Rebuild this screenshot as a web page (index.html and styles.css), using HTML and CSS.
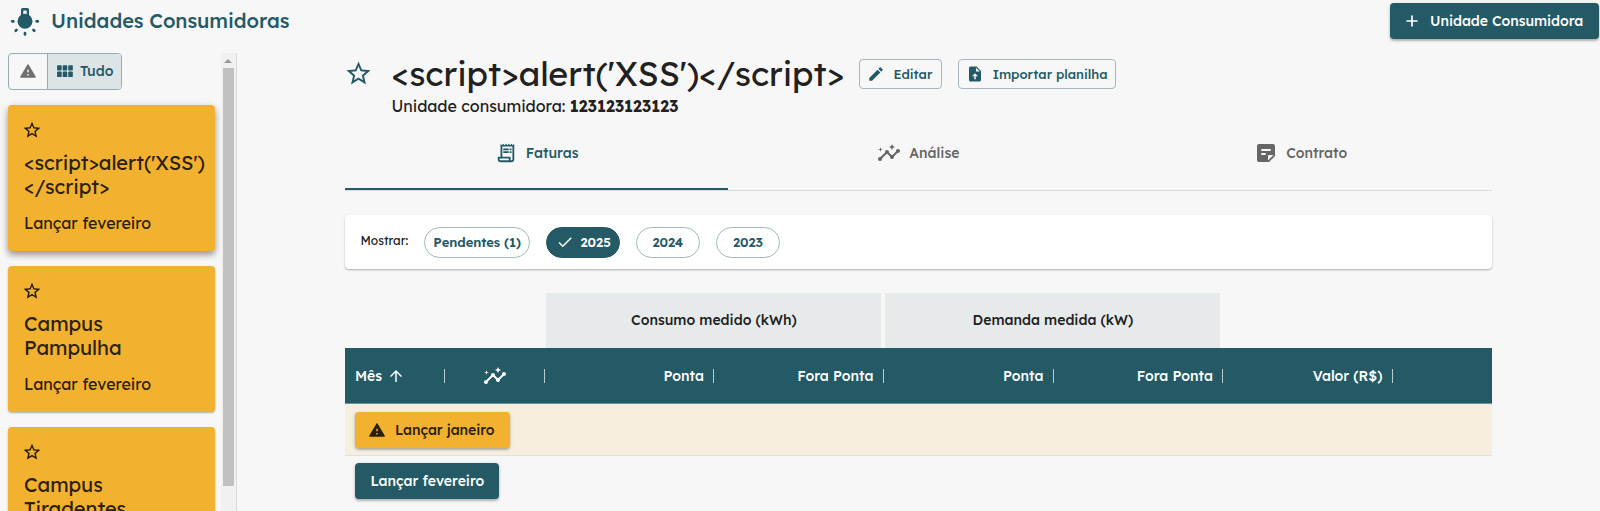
FILE: index.html
```html
<!DOCTYPE html>
<html lang="pt-BR">
<head>
<meta charset="utf-8">
<title>Unidades Consumidoras</title>
<link rel="stylesheet" href="styles.css">
</head>
<body>
<svg class="defs" width="0" height="0" aria-hidden="true">
  <symbol id="star" viewBox="0 0 24 24"><path d="m22 9.24-7.19-.62L12 2 9.19 8.63 2 9.24l5.46 4.73L5.82 21 12 17.27 18.18 21l-1.63-7.03L22 9.24zM12 15.4l-3.76 2.27 1-4.28-3.32-2.88 4.38-.38L12 6.1l1.71 4.04 4.38.38-3.32 2.88 1 4.28L12 15.4z"/></symbol>
  <symbol id="warn" viewBox="0 0 24 24"><path d="M2.7 21h18.600c.9 0 1.400-.9.9-1.700L12.900 3.500c-.4-.8-1.400-.8-1.800 0L1.800 19.300c-.5.8 0 1.700.9 1.700zM12 14c-.55 0-1-.45-1-1v-2c0-.55.45-1 1-1s1 .45 1 1v2c0 .55-.45 1-1 1zm1 4h-2v-2h2v2z"/></symbol>
  <symbol id="insights" viewBox="0 0 24 24"><path d="M21 8c-1.45 0-2.26 1.44-1.93 2.51l-3.55 3.56c-.3-.09-.74-.09-1.04 0l-2.55-2.55C12.27 10.45 11.46 9 10 9c-1.45 0-2.27 1.44-1.93 2.52l-4.56 4.55C2.44 15.74 1 16.55 1 18c0 1.1.9 2 2 2 1.45 0 2.26-1.44 1.93-2.51l4.55-4.56c.3.09.74.09 1.04 0l2.55 2.55C12.73 16.55 13.54 18 15 18c1.45 0 2.27-1.44 1.93-2.52l3.56-3.55C21.56 12.26 23 11.45 23 10c0-1.1-.9-2-2-2z"/><path d="m15 9 .94-2.07L18 6l-2.06-.93L15 3l-.92 2.07L12 6l2.08.93zM3.5 11 4 9l2-.5L4 8l-.5-2L3 8l-2 .5L3 9z"/></symbol>
</svg>

<header class="topbar">
  <svg class="bulb" viewBox="0 0 30 30"><circle cx="15" cy="14.200" r="7.500"/><path fill-rule="evenodd" d="M12.600 1h4.800q1.600 0 1.600 1.600V9h-8V2.600q0-1.600 1.600-1.600zM13.300 3.500v4h3.400v-4z"/><g fill="none" stroke="currentColor" stroke-width="2.700" stroke-linecap="round"><path d="M2.200 14.300h1.200M26.600 14.300h1.200M15 26v1.500M6.600 22.900l-.9.9M23.400 22.900l.9.9"/></g></svg>
  <h1 class="page-title">Unidades Consumidoras</h1>
  <button class="btn btn-primary btn-new"><svg class="i20" viewBox="0 0 24 24"><path d="M18 13h-5v5c0 .55-.45 1-1 1s-1-.45-1-1v-5H6c-.55 0-1-.45-1-1s.45-1 1-1h5V6c0-.55.45-1 1-1s1 .45 1 1v5h5c.55 0 1 .45 1 1s-.45 1-1 1z"/></svg><span>Unidade Consumidora</span></button>
</header>

<div class="body">
  <aside class="sidebar">
    <div class="list">
      <div class="toggle">
        <button class="toggle-item"><svg class="i18" viewBox="0 0 24 24"><use href="#warn"/></svg></button>
        <button class="toggle-item on"><svg class="i20" viewBox="0 0 24 24"><rect x="2.500" y="5" width="5.500" height="6.500" rx="1"/><rect x="9.200" y="5" width="5.500" height="6.500" rx="1"/><rect x="15.900" y="5" width="5.500" height="6.500" rx="1"/><rect x="2.500" y="12.700" width="5.500" height="6.500" rx="1"/><rect x="9.200" y="12.700" width="5.500" height="6.500" rx="1"/><rect x="15.900" y="12.700" width="5.500" height="6.500" rx="1"/></svg><span>Tudo</span></button>
      </div>
      <article class="card raised"><svg class="i20" viewBox="0 0 24 24"><use href="#star"/></svg><h2 class="card-title">&lt;script&gt;alert('XSS')<br>&lt;/script&gt;</h2><p class="card-note">Lançar fevereiro</p></article>
      <article class="card"><svg class="i20" viewBox="0 0 24 24"><use href="#star"/></svg><h2 class="card-title">Campus<br>Pampulha</h2><p class="card-note">Lançar fevereiro</p></article>
      <article class="card"><svg class="i20" viewBox="0 0 24 24"><use href="#star"/></svg><h2 class="card-title">Campus<br>Tiradentes</h2></article>
    </div>
    <div class="scrollbar"><svg class="arrow" viewBox="0 0 8 4"><path d="M0 4 4 0l4 4z"/></svg><div class="thumb"></div></div>
  </aside>

  <main class="content">
    <div class="unit">
      <svg class="unit-star" viewBox="0 0 24 24"><use href="#star"/></svg>
      <div class="unit-text">
        <div class="unit-head">
          <h2 class="unit-name">&lt;script&gt;alert('XSS')&lt;/script&gt;</h2>
          <button class="btn-outline edit"><svg class="i18" viewBox="0 0 24 24"><path d="M3 17.250V21h3.750L17.810 9.940l-3.750-3.750L3 17.250zM20.710 7.040c.39-.39.39-1.020 0-1.410l-2.340-2.340a1 1 0 0 0-1.410 0l-1.830 1.830 3.750 3.750 1.830-1.830z"/></svg><span>Editar</span></button>
          <button class="btn-outline import"><svg class="i18" viewBox="0 0 24 24"><path fill-rule="evenodd" d="M14 2H6C4.900 2 4 2.900 4 4v16c0 1.100.9 2 2 2h12c1.100 0 2-.9 2-2V8l-6-6zm-.700 1.500V8.700h5.200zM13 15v4h-2v-4H8l4-4 4 4z"/></svg><span>Importar planilha</span></button>
        </div>
        <p class="unit-code">Unidade consumidora: <strong>123123123123</strong></p>
      </div>
    </div>

    <nav class="tabs">
      <a class="tab active"><svg class="i22" viewBox="0 0 24 24"><path d="M19.500 3.500 18 2l-1.500 1.500L15 2l-1.500 1.500L12 2l-1.500 1.500L9 2 7.500 3.500 6 2v14H3v3c0 1.660 1.340 3 3 3h12c1.660 0 3-1.340 3-3V2l-1.500 1.500zM15 20H6c-.55 0-1-.45-1-1v-1h10v2zm4-1c0 .55-.45 1-1 1s-1-.45-1-1v-3H8V5h11v14z"/><path d="M9 7h6v2H9zM16 7h2v2h-2zM9 10h6v2H9zM16 10h2v2h-2z"/></svg><span>Faturas</span></a>
      <a class="tab"><svg class="i24" viewBox="0 0 24 24"><use href="#insights"/></svg><span>Análise</span></a>
      <a class="tab"><svg class="i24" viewBox="0 0 24 24"><path fill-rule="evenodd" d="M19 3H5c-1.100 0-2 .9-2 2v14c0 1.100.9 2 2 2h10l6-6V5c0-1.100-.9-2-2-2zM8 8h8q1 0 1 1t-1 1H8q-1 0-1-1t1-1zm3 6H8q-1 0-1-1t1-1h3q1 0 1 1t-1 1zm3 5.500V15q0-1 1-1h4.500z"/></svg><span>Contrato</span></a>
    </nav>

    <section class="filters">
      <span class="filters-label">Mostrar:</span>
      <button class="chip pend"><span>Pendentes (1)</span></button>
      <button class="chip sel"><svg class="i18" viewBox="0 0 24 24"><path d="M9 16.170 4.830 12l-1.420 1.410L9 19 21 7l-1.410-1.410z"/></svg><span>2025</span></button>
      <button class="chip year"><span>2024</span></button>
      <button class="chip year"><span>2023</span></button>
    </section>

    <section class="table">
      <div class="groups"><div class="group"><span>Consumo medido (kWh)</span></div><div class="group"><span>Demanda medida (kW)</span></div></div>
      <div class="thead">
        <div class="th month"><span>Mês</span><svg class="i18" viewBox="0 0 24 24"><path d="m4 12 1.410 1.410L11 7.830V20h2V7.830l5.580 5.590L20 12l-8-8-8 8z"/></svg></div>
        <div class="th mid"><svg class="i24" viewBox="0 0 24 24"><use href="#insights"/></svg></div>
        <div class="th num"><span>Ponta</span></div>
        <div class="th num"><span>Fora Ponta</span></div>
        <div class="th num"><span>Ponta</span></div>
        <div class="th num"><span>Fora Ponta</span></div>
        <div class="th num"><span>Valor (R$)</span></div>
        <div class="th last"></div>
      </div>
      <div class="row pending"><button class="btn btn-warn"><svg class="i18" viewBox="0 0 24 24"><use href="#warn"/></svg><span>Lançar janeiro</span></button></div>
      <div class="row"><button class="btn btn-primary btn-feb"><span>Lançar fevereiro</span></button></div>
    </section>
  </main>
</div>
</body>
</html>
```
FILE: styles.css
```css
* { box-sizing: border-box; }
body {
  margin: 0;
  height: 511px;
  overflow: hidden;
  background: #f7f7f7;
  color: #212121;
  font-family: Lexend, Inter, "Liberation Sans", sans-serif;
  font-size: 14px;
}
h1, h2, p { margin: 0; font-weight: 400; }
button { font: inherit; color: inherit; background: none; border: 0; padding: 0; margin: 0; }
svg { fill: currentColor; flex: none; display: block; }
span, h1, h2, p { white-space: nowrap; }
.defs { position: absolute; }
.i18 { width: 18px; height: 18px; }
.i20 { width: 20px; height: 20px; }
.i22 { width: 24px; height: 22px; }
.i24 { width: 24px; height: 24px; }

.topbar { display: flex; align-items: flex-start; height: 53px; padding: 3px 1px 0 10px; }
.bulb { width: 30px; height: 30px; margin-top: 4px; color: #245a65; }
.page-title { margin: 6px auto 0 11px; font-size: 20px; line-height: 24px; font-weight: 500; letter-spacing: -.06px; color: #245a65; }

.btn { display: flex; align-items: center; height: 36px; border-radius: 4px; font-weight: 500; box-shadow: 0 2px 2px rgba(0,0,0,.2), 0 1px 4px rgba(0,0,0,.14); }
.btn-primary { background: #245a65; color: #fff; }
.btn-new { width: 209px; padding-left: 12px; gap: 8px; letter-spacing: -.05px; }
.btn-warn { width: 155px; background: #f2b12f; color: #2b2008; padding-left: 13px; gap: 9px; letter-spacing: -.05px; }
.btn-feb { width: 144.500px; padding-left: 15.500px; }

.body { display: flex; height: 458px; }
.sidebar { display: flex; width: 237px; border-right: 1px solid #dadada; overflow: hidden; }
.list { display: flex; flex-direction: column; gap: 15px; width: 221px; padding: 0 6px 0 8px; }
.toggle { display: flex; width: 113.500px; height: 37px; border: 1px solid #94aeb4; border-radius: 4px; overflow: hidden; flex: none; }
.toggle-item { display: flex; align-items: center; justify-content: center; width: 38px; padding-bottom: 1px; color: #707070; }
.toggle-item.on { flex: 1; gap: 5px; background: #dce4e5; color: #245a65; border-left: 1px solid #94aeb4; font-weight: 500; }
.toggle-item span { padding-bottom: 1px; }
.card { flex: none; height: 146px; padding: 15px 14px 0 16px; background: #f2b12f; color: #2b2008; border-radius: 4px; box-shadow: 0 1px 2px rgba(0,0,0,.3); }
.card.raised { box-shadow: 0 4px 6px rgba(0,0,0,.3), 0 2px 9px rgba(0,0,0,.15); }
.card .i20 { margin-left: -2px; color: #1c1400; }
.card-title { margin-top: 11px; font-size: 20px; line-height: 24px; letter-spacing: -.04px; }
.card-note { margin-top: 12px; font-size: 16px; line-height: 24px; letter-spacing: -.05px; }
.scrollbar { width: 15px; padding: 6px 2px 0; background: #f1f1f1; }
.arrow { width: 8px; height: 4px; margin: 0 auto 5px 1px; color: #989898; }
.thumb { width: 11px; height: 418px; background: #c1c1c1; }

.content { width: 1147px; margin-left: 108.400px; }
.unit { display: flex; }
.unit-star { width: 29px; height: 29px; margin: 6px 18px 0 -1px; color: #245a65; }
.unit-head { display: flex; height: 41px; }
.unit-name { width: 468px; font-size: 34px; line-height: 41px; letter-spacing: -.06px; }
.unit-code { font-size: 16px; line-height: 24px; letter-spacing: -.02px; }
.unit-code strong { font-weight: 700; }
.btn-outline { display: flex; align-items: center; height: 30px; margin-top: 5.500px; border: 1px solid #a3b9bd; border-radius: 4px; color: #245a65; font-size: 13px; font-weight: 500; padding-left: 7px; gap: 8px; }
.edit { width: 83px; margin-right: 16px; }
.import { width: 158px; }

.tabs { display: flex; height: 73px; border-bottom: 1px solid #dcdcdc; }
.tab { flex: 1; display: flex; align-items: center; justify-content: center; gap: 8px; height: 72px; padding: 0 1px 1px 0; color: #666; font-weight: 500; border-bottom: 2px solid transparent; }
.tab.active { color: #245a65; border-color: #245a65; }

.filters { display: flex; height: 54px; margin-top: 24px; padding: 12px 15px; background: #fff; border-radius: 4px; box-shadow: 0 1px 2px rgba(0,0,0,.3); }
.filters-label { width: 63.500px; font-size: 12px; line-height: 27px; }
.chip { display: flex; align-items: center; justify-content: center; height: 31px; padding-bottom: 1px; margin-right: 16px; border: 1px solid #a3b9bd; border-radius: 16px; color: #245a65; font-size: 13px; font-weight: 600; letter-spacing: -.05px; }
.pend { width: 106.500px; }
.year { width: 64px; }
.sel { width: 73.500px; gap: 7px; color: #fff; background: #245a65; border-color: #245a65; }

.groups { display: flex; gap: 4px; height: 55px; margin-top: 24px; padding-left: 201px; }
.group { display: flex; align-items: center; justify-content: center; width: 335px; padding-bottom: 2px; background: #e6eaeb; font-weight: 500; }
.thead { display: grid; grid-template-columns: 100px 99.500px 169.500px 169.500px 170px 169.500px 169.500px 1fr; height: 56px; background: #245a65; color: #fff; font-weight: 500; border-bottom: 1px solid #6c9299; }
.th { display: flex; align-items: center; gap: 5px; }
.th:not(.last)::after { content: ""; width: 1px; height: 14px; background: #bccdd0; margin-left: 9.500px; }
.month { padding-left: 9.500px; }
.month::after, .mid::after { margin-left: auto !important; }
.mid { padding-left: 37.500px; }
.num { justify-content: flex-end; gap: 0; }
.row { padding: 7px 9.500px; }
.pending { height: 52px; padding-top: 7.500px; background: #f6eedf; border-bottom: 1px solid #e0e0e0; }
```
